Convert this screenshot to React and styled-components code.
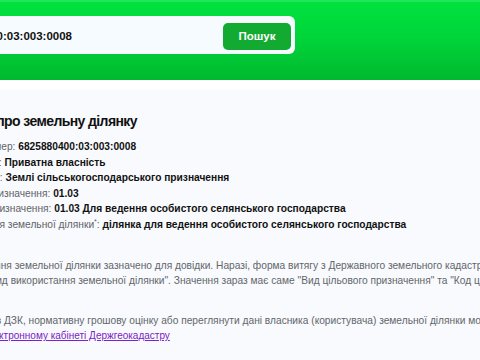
import React from "react";
import styled, { createGlobalStyle } from "styled-components";

const GlobalStyle = createGlobalStyle`
  html, body {
    margin: 0;
    padding: 0;
    background: #f8fafd;
    overflow: hidden;
    font-family: "Liberation Sans", Arial, sans-serif;
  }
`;

// the page is wider than the window; the window shows its middle
const Page = styled.div`
  width: 1100px;
  margin-left: -81px;
`;

const Header = styled.header`
  height: 80px;
  box-sizing: border-box;
  padding-top: 16px;
  background: linear-gradient(180deg, #00e23e 0%, #00d53a 45%, #00b92f 100%);
  border-top: 2px solid #1fe65a;
`;

const SearchForm = styled.form`
  width: 376px;
  height: 38px;
  box-sizing: border-box;
  margin-top: -2px;
  padding: 5px 4px 3px 20px;
  display: flex;
  align-items: center;
  justify-content: space-between;
  background: #f6fbff;
  border-radius: 6px;
`;

const SearchInput = styled.input`
  flex: 1;
  border: 0;
  outline: 0;
  background: transparent;
  font-family: inherit;
  font-size: 11.5px;
  font-weight: 700;
  color: #111;
  padding: 0;
`;

const SearchButton = styled.button`
  width: 68px;
  height: 27px;
  border: 0;
  border-radius: 5px;
  background: #13aa31;
  color: #fff;
  font-family: inherit;
  font-size: 11.5px;
  font-weight: 700;
`;

const Main = styled.main`
  border-top: 10px solid #fff;
  padding-top: 21px;
`;

const Title = styled.h1`
  margin: 0 0 8px 0;
  font-size: 14px;
  letter-spacing: -0.6px;
  line-height: 20px;
  font-weight: 700;
  color: #111;
`;

const Rows = styled.div`
  display: flex;
  flex-direction: column;
`;

const Row = styled.div`
  font-size: 10.2px;
  line-height: 15.6px;
  white-space: nowrap;
`;

const Label = styled.span`
  color: #5f6368;
  sup {
    font-size: 7px;
    line-height: 0;
  }
`;

const Value = styled.b`
  color: #111;
  font-weight: 700;
`;

const Note = styled.p`
  margin: ${(p) => p.$top}px 0 0;
  font-size: 10.2px;
  line-height: 15.5px;
  color: #62666b;
  white-space: nowrap;
`;

const Link = styled.a`
  font-size: 10px;
  color: #7b22c9;
  text-decoration: underline;
`;

const rows = [
  ["Кадастровий номер", "6825880400:03:003:0008"],
  ["Форма власності", "Приватна власність"],
  ["Категорія земель", "Землі сільськогосподарського призначення"],
  ["Код цільового призначення", "01.03"],
  ["Вид цільового призначення", "01.03 Для ведення особистого селянського господарства"],
];

export default function App() {
  return (
    <>
      <GlobalStyle />
      <Page>
        <Header>
          <SearchForm onSubmit={(e) => e.preventDefault()}>
            <SearchInput defaultValue="6825880400:03:003:0008" />
            <SearchButton type="submit">Пошук</SearchButton>
          </SearchForm>
        </Header>
        <Main>
          <Title>Інформація про земельну ділянку</Title>
          <Rows>
            {rows.map(([label, value]) => (
              <Row key={label}>
                <Label>{label}: </Label>
                <Value>{value}</Value>
              </Row>
            ))}
            <Row>
              <Label>
                Вид використання земельної ділянки<sup>*</sup>:{" "}
              </Label>
              <Value>ділянка для ведення особистого селянського господарства</Value>
            </Row>
          </Rows>
          <Note $top={25}>
            * Вид використання земельної ділянки зазначено для довідки. Наразі, форма витягу з Державного земельного кадастру
            <br />
            не має графи "Вид використання земельної ділянки". Значення зараз має саме "Вид цільового призначення" та "Код цільового призначення".
          </Note>
          <Note $top={24}>
            Отримати витяг з ДЗК, нормативну грошову оцінку або переглянути дані власника (користувача) земельної ділянки можна
            <br />
            <Link href="#">в офіційному електронному кабінеті Держгеокадастру</Link>
          </Note>
        </Main>
      </Page>
    </>
  );
}
